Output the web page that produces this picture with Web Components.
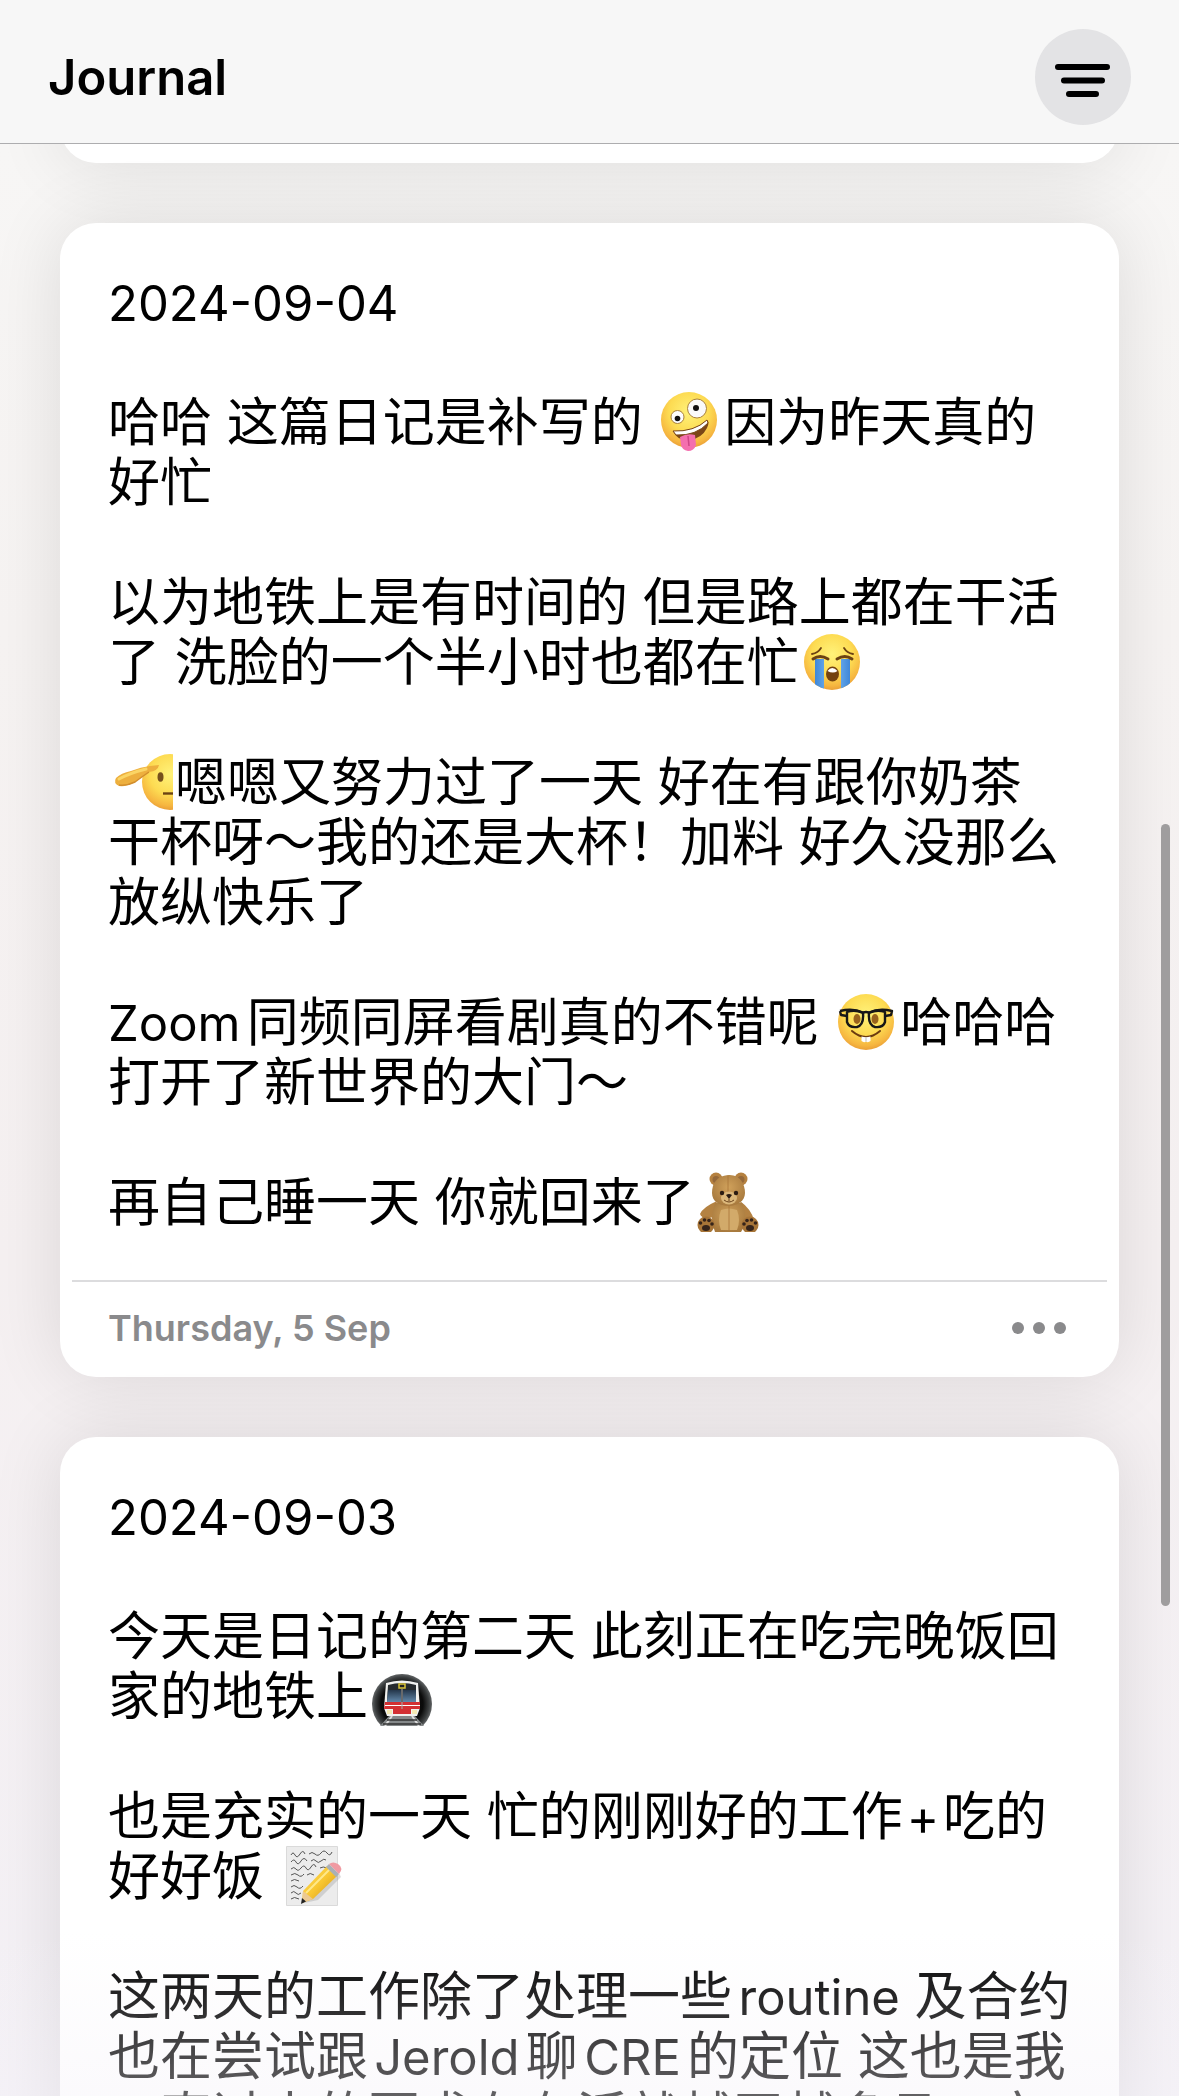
<!DOCTYPE html>
<html lang="zh-CN">
<head>
<meta charset="utf-8">
<meta name="viewport" content="width=device-width, initial-scale=1">
<title>Journal</title>
<style>
  body { margin: 0; font-family: Inter, "Noto Sans CJK SC", sans-serif; color: #000; }
  .latin { font-size: 49px; line-height: 0; }
  .sign { margin: 0 4px; }
</style>
</head>
<body>
<journal-app>
  <journal-header slot="header">Journal</journal-header>
  <journal-entry tail></journal-entry>
  <journal-entry day="Thursday, 5 Sep">
    <p><span class="latin">2024-09-04</span></p>
    <p>哈哈 这篇日记是补写的 <emoji-icon name="zany"></emoji-icon>因为昨天真的<br>好忙</p>
    <p>以为地铁上是有时间的 但是路上都在干活<br>了 洗脸的一个半小时也都在忙<emoji-icon name="cry"></emoji-icon></p>
    <p><emoji-icon name="salute"></emoji-icon>嗯嗯又努力过了一天 好在有跟你奶茶<br>干杯呀～我的还是大杯！加料 好久没那么<br>放纵快乐了</p>
    <p><span class="latin">Zoom</span>同频同屏看剧真的不错呢 <emoji-icon name="nerd"></emoji-icon>哈哈哈<br>打开了新世界的大门～</p>
    <p>再自己睡一天 你就回来了<emoji-icon name="bear"></emoji-icon></p>
  </journal-entry>
  <journal-entry day="Wednesday, 4 Sep">
    <p><span class="latin">2024-09-03</span></p>
    <p>今天是日记的第二天 此刻正在吃完晚饭回<br>家的地铁上<emoji-icon name="metro"></emoji-icon></p>
    <p>也是充实的一天 忙的刚刚好的工作<span class="latin sign">+</span>吃的<br>好好饭 <emoji-icon name="memo"></emoji-icon></p>
    <p>这两天的工作除了处理一些<span class="latin">routine</span> 及合约<br>也在尝试跟<span class="latin">Jerold</span>聊<span class="latin">CRE</span>的定位 这也是我<br>一直过来的要求在有活就越干越多且一定</p>
  </journal-entry>
</journal-app>

<script>
const face = `<defs>
  <radialGradient id="skin" cx=".5" cy=".36" r=".66">
    <stop offset="0" stop-color="#fff27a"/><stop offset=".55" stop-color="#fddb52"/>
    <stop offset=".85" stop-color="#f6b640"/><stop offset="1" stop-color="#e79a35"/>
  </radialGradient>
  <linearGradient id="tear" x1="0" x2="1"><stop offset="0" stop-color="#3f87d8"/><stop offset=".5" stop-color="#7fbdf5"/><stop offset="1" stop-color="#3f87d8"/></linearGradient>
</defs>`;

const EMOJI = {
  zany: ['🤪', `${face}<circle cx="32" cy="28" r="28" fill="url(#skin)"/>
    <circle cx="20.500" cy="25" r="6.500" fill="#fdfdfd" stroke="#a9813c"/><circle cx="20.500" cy="26.500" r="2.800" fill="#111"/>
    <circle cx="40" cy="16.500" r="9.500" fill="#fafafa" stroke="#a9813c"/><circle cx="39" cy="16" r="3" fill="#111"/>
    <path d="M16 39Q37 40 50 28Q53 30 50 36Q45 46 33 48Q20 49 16 39Z" fill="#7b4617"/>
    <path d="M16 39Q37 40 50 28L51 31Q39 44 19 43Z" fill="#fff" stroke="#7b4617"/>
    <path d="M23 45Q30 41 38 43L39 53Q37 59 31 59Q25 58 24 53Z" fill="#f46fae"/><path d="M31 44L32 54" stroke="#cf4587" stroke-width="1.500"/>`],
  cry: ['😭', `${face}<clipPath id="c"><circle cx="33" cy="30" r="28"/></clipPath><circle cx="33" cy="30" r="28" fill="url(#skin)"/>
    <g clip-path="url(#c)"><path d="M16 27h9v31h-9zM42 27h9v31h-9z" fill="url(#tear)"/></g>
    <g fill="none" stroke="#6b4213" stroke-linecap="round"><path d="M13 22Q19 21 22 16M45 16Q48 21 54 22" stroke-width="1.800"/>
    <path d="M14 27Q21 22 29 27M38 27Q46 22 53 27" stroke-width="3"/></g>
    <ellipse cx="33.500" cy="42" rx="6.500" ry="7.500" fill="#73410f"/><path d="M28.500 39Q33 33 38.500 39Q34 42 28.500 39Z" fill="#fff"/>`],
  salute: ['🫡', `${face}<circle cx="62" cy="30" r="28" fill="url(#skin)"/>
    <ellipse cx="52.500" cy="25" rx="3" ry="4.800" fill="#76501c"/><path d="M55 41.500H65" stroke="#6b4213" stroke-width="2.400"/>
    <path d="M51 13Q50 19 41 20Q35 24 27 30Q19 35 11 34Q5 31 8 26Q13 21 23 19Q33 15 42 14Z" fill="#edaf3e"/>
    <path d="M11 33Q19 34 27 30Q35 24 41 20" stroke="#d28e2d" stroke-width="1.500" fill="none"/>
    <path d="M11 27Q22 21 38 17" stroke="#fbd565" stroke-width="3" fill="none" stroke-linecap="round"/>`],
  nerd: ['🤓', `${face}<circle cx="33" cy="30" r="28" fill="url(#skin)"/>
    <ellipse cx="24" cy="27" rx="3.500" ry="5" fill="#99631d"/><ellipse cx="42" cy="27" rx="3.500" ry="5" fill="#99631d"/>
    <path d="M14 20Q22 17 30 21Q31 33 24 35Q16 36 14 30ZM52 20Q44 17 36 21Q35 33 42 35Q50 36 52 30Z" fill="none" stroke="#171717" stroke-width="2.400" stroke-linejoin="round"/>
    <path d="M7 19Q20 16 30 20.500Q33 19.500 36 20.500Q46 16 59 19L58 23L52 24M7 19L8 23L14 24" fill="none" stroke="#171717" stroke-width="2.400" stroke-linejoin="round"/>
    <path d="M19 39Q33 51 47 39" fill="none" stroke="#6b3b10" stroke-width="2" stroke-linecap="round"/>
    <path d="M28.500 44.500Q33 46 37.500 44.500V49Q35 51 33 49.500Q31 51 28.500 49Z" fill="#fff"/><path d="M33 45.500V49.500" stroke="#bbb"/>`],
  bear: ['🧸', `<defs><radialGradient id="fur" cx=".5" cy=".4" r=".6"><stop offset="0" stop-color="#d0a15b"/><stop offset="1" stop-color="#a87a3e"/></radialGradient></defs>
    <circle cx="21" cy="7" r="6.500" fill="#b58140"/><circle cx="21" cy="7.500" r="3.500" fill="#94683a"/><circle cx="46" cy="7" r="6.500" fill="#b58140"/><circle cx="46" cy="7.500" r="3.500" fill="#94683a"/>
    <path d="M22 29Q8 35 5 42Q7 48 19 45ZM45 29Q56 37 59 48L49 49Z" fill="#b48242"/>
    <path d="M20 31H47Q54 48 46 60H20Q14 46 20 31Z" fill="url(#fur)"/><path d="M26 38Q34 35 42 38Q46 48 42 58H26Q22 48 26 38Z" fill="#d2aa6a"/><path d="M34 34V58" stroke="#a87538" stroke-width=".8"/>
    <path d="M33 3C45 2 50 12 50 21C50 29 42 34 34 34C24 34 17 29 17 21C17 11 22 4 33 3Z" fill="url(#fur)"/>
    <path d="M33 4V21" stroke="#a87538" stroke-width=".8"/><ellipse cx="34" cy="26" rx="8" ry="6.500" fill="#dbb77a"/>
    <circle cx="27" cy="21" r="2.200" fill="#2b1c12"/><circle cx="41" cy="21" r="2.200" fill="#2b1c12"/><path d="M31 23Q34 21 37 23L34 27Z" fill="#2b1c12"/><path d="M34 27V29M29 28Q34 32 39 28" fill="none" stroke="#6b431d"/>
    <circle cx="11" cy="53" r="8.500" fill="#a77538"/><circle cx="55" cy="53" r="8.500" fill="#a77538"/>
    <g fill="#35241a"><ellipse cx="11" cy="56" rx="4" ry="3"/><circle cx="5.500" cy="51" r="1.800"/><circle cx="9.500" cy="48" r="1.800"/><circle cx="14" cy="48.500" r="1.800"/><circle cx="17" cy="52" r="1.800"/>
    <ellipse cx="55" cy="56" rx="4" ry="3"/><circle cx="49" cy="52" r="1.800"/><circle cx="52" cy="48.500" r="1.800"/><circle cx="56.500" cy="48" r="1.800"/><circle cx="60.500" cy="51" r="1.800"/></g>`],
  metro: ['🚇', `<defs><radialGradient id="tun" cx=".5" cy=".5" r=".5"><stop offset="0" stop-color="#000"/><stop offset=".7" stop-color="#0b0b0b"/><stop offset=".9" stop-color="#3c3f40"/><stop offset="1" stop-color="#626566"/></radialGradient>
    <linearGradient id="win" x1="0" y1="0" x2="0" y2="1"><stop offset="0" stop-color="#24364a"/><stop offset="1" stop-color="#6288aa"/></linearGradient></defs>
    <circle cx="34" cy="38" r="30" fill="url(#tun)"/><path d="M21 50H47L56 60H12Z" fill="#85898a"/>
    <path d="M24 50L17 60M44 50L51 60" stroke="#ddd" stroke-width="2"/><path d="M19 54H49M15 58H53" stroke="#333" stroke-width="1.500"/>
    <path d="M18 17Q34 12 50 17L52 42L49 50H19L16 42Z" fill="#f1f1ef"/><path d="M20 19Q34 15 48 19V36H19Z" fill="#272b2e"/>
    <path d="M20 24H33V36H19ZM35 24H48V36H35Z" fill="url(#win)"/><path d="M17 36H52V43H16Z" fill="#d33033"/><path d="M17 39.500H52" stroke="#fff" stroke-width="1.200"/>
    <path d="M31 18H37V22H31Z" fill="#222" stroke="#d9c438" stroke-width="1.500"/><path d="M34 23V48" stroke="#aaa"/><path d="M25 43H43V48H25Z" fill="#d33033"/><path d="M19 44H24V48H19ZM44 44H49V48H44Z" fill="#f5e9b4"/>`],
  memo: ['📝', `<defs><linearGradient id="pen" x1="0" y1="0" x2="1" y2="1"><stop offset="0" stop-color="#ffdf63"/><stop offset=".5" stop-color="#f8c630"/><stop offset="1" stop-color="#c88a18"/></linearGradient></defs>
    <path d="M7.500 .5H58.500V59.500H7.500Z" fill="#ececec" stroke="#dadada"/>
    <path d="M12 9q2-4 4 0t5-1t5 0M30 8q3-3 6 0t6-1t6 0t5-1M12 16q3-4 5 0t5-1t6 0M32 15q3-3 5 0t5 0t5-1M12 23q3-3 5 0t5-1t5 0t5-1t5 0M41 22q3-2 7 0M12 29q4-3 7 0t6-1M28 29q3-3 7 0M12 35q3-3 8 0M12 41q3-3 6 0t6-1M12 47q3-3 5 0t5 0M12 53q3-3 8 0" fill="none" stroke="#555" stroke-width="1"/>
    <path d="M25 57L60 27L62 31L39 54Z" fill="#777" opacity=".25"/>
    <path d="M24 45L48 20L58 30L34 53L23 57Z" fill="url(#pen)"/><path d="M27 47L51 23" stroke="#ffe889" stroke-width="2"/>
    <path d="M24 45L34 53L23 57Z" fill="#ecc993"/><path d="M23 52L27 55.500L22 58Z" fill="#222"/>
    <path d="M47 21L50 18L60 28L57 31Z" fill="#a9b0b5"/><path d="M50 18Q54 15 59 18Q65 22 60 28Z" fill="#f09aa2"/>`]
};

class EmojiIcon extends HTMLElement {
  connectedCallback() {
    if (this.shadowRoot) return;
    const [label, art] = EMOJI[this.getAttribute('name')];
    this.attachShadow({ mode: 'open' }).innerHTML = `
      <style>:host{display:inline-block;width:67px;height:60px;margin-top:-1px;vertical-align:top}:host([name=memo]) svg,svg{display:block}</style>
      <svg width="65" height="60" viewBox="0 0 65 60" role="img" aria-label="${label}">${art}</svg>`;
  }
}

class JournalHeader extends HTMLElement {
  constructor() {
    super();
    this.attachShadow({ mode: 'open' }).innerHTML = `
      <style>
        :host{display:flex;align-items:center;justify-content:space-between;box-sizing:border-box;height:144px;padding:10px 48px 0;background:#f7f7f7;border-bottom:1px solid #adadaf}
        h1{margin:0;padding-top:2px;font-size:49px;line-height:60px;font-weight:600}
        button{display:block;width:96px;height:96px;padding:0;border:0;border-radius:50%;background:#e3e3e5}
        svg{display:block}
      </style>
      <h1><slot></slot></h1>
      <button type="button" aria-label="Filter"><svg width="96" height="96" viewBox="0 0 96 96"><path d="M23 38H72M29 51.500H67M34 65H61" stroke="#000" stroke-width="6" stroke-linecap="round"/></svg></button>`;
  }
}

class JournalEntry extends HTMLElement {
  connectedCallback() {
    if (this.shadowRoot) return;
    const tail = this.hasAttribute('tail');
    this.attachShadow({ mode: 'open' }).innerHTML = `
      <style>
        :host{display:block;flex:none;background:#fff;border-radius:36px;box-shadow:0 0 72px rgba(0,0,0,.11)}
        :host([tail]){height:79px;margin-top:-60px}
        .text{display:flex;flex-direction:column;gap:60px;padding:50px 48px 47px;font-size:52px;line-height:60px;white-space:nowrap;text-autospace:normal}
        ::slotted(p){margin:0}
        footer{display:flex;align-items:center;justify-content:space-between;height:92px;margin:0 12px;padding:0 36px 3px;border-top:2px solid #dcdcde;color:#8a8a8c;font-size:36px;font-weight:600}
        button{display:block;padding:0;border:0;background:none;color:inherit}
        svg{display:block}
      </style>
      ${tail ? '' : `<div class="text"><slot></slot></div>
      <footer><time>${this.getAttribute('day')}</time>
      <button type="button" aria-label="More"><svg width="66" height="48" viewBox="0 0 66 48" fill="currentColor"><circle cx="13" cy="24" r="6"/><circle cx="34" cy="24" r="6"/><circle cx="55" cy="24" r="6"/></svg></button></footer>`}`;
  }
}

class JournalApp extends HTMLElement {
  constructor() {
    super();
    this.attachShadow({ mode: 'open' }).innerHTML = `
      <style>
        :host{display:flex;flex-direction:column;position:relative;height:100vh;overflow:hidden;background:linear-gradient(#f7f6f5 7%,#f6f3f2 30%,#f5f0f1 60%,#f4f1f6)}
        ::slotted([slot=header]){position:relative;z-index:2;flex:none}
        main{flex:1;min-height:0;display:flex;flex-direction:column;gap:60px;padding:0 60px}
        .fade{position:absolute;z-index:1;left:0;right:0;bottom:0;height:164px;background:linear-gradient(rgba(245,242,248,0),rgba(245,242,248,.4));pointer-events:none}
        .thumb{position:absolute;z-index:3;right:9px;top:824px;width:9px;height:782px;border-radius:5px;background:#9f9d9e}
      </style>
      <slot name="header"></slot>
      <main><slot></slot></main>
      <div class="fade"></div>
      <div class="thumb"></div>`;
  }
}

customElements.define('emoji-icon', EmojiIcon);
customElements.define('journal-header', JournalHeader);
customElements.define('journal-entry', JournalEntry);
customElements.define('journal-app', JournalApp);
</script>
</body>
</html>
